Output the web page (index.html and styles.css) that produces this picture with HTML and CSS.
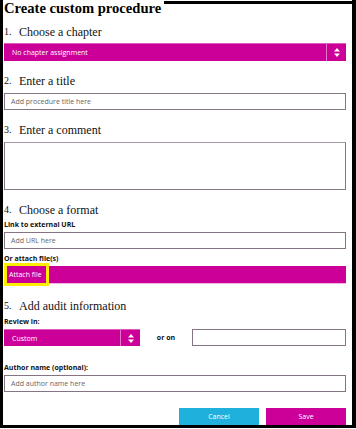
FILE: index.html
```html
<!DOCTYPE html>
<html lang="en">
  <head>
    <meta charset="UTF-8" />
    <meta name="viewport" content="width=device-width, initial-scale=1.0" />
    <title>Create custom procedure</title>
    <link rel="stylesheet" href="styles.css">
  </head>
  <body>
    <div class="frame">
      <div class="top">
        <h1 class="title">Create custom procedure</h1>
        <div class="top-line"></div>
      </div>

      <div class="content">
        <h2 class="step step-first"><span class="num">1.</span>Choose a chapter</h2>
        <div class="select">
          <span class="select-text">No chapter assignment</span>
          <span class="select-arrow">
            <svg width="6" height="9" viewBox="0 0 6 9">
              <path d="M0 3.5 L3 0 L6 3.5 Z M0 5.5 L6 5.5 L3 9 Z" fill="#fff" />
            </svg>
          </span>
        </div>

        <h2 class="step"><span class="num">2.</span>Enter a title</h2>
        <div class="input">Add procedure title here</div>

        <h2 class="step"><span class="num">3.</span>Enter a comment</h2>
        <div class="textarea"></div>

        <h2 class="step"><span class="num">4.</span>Choose a format</h2>
        <label class="field-label">Link to external URL</label>
        <div class="input">Add URL here</div>

        <label class="field-label label-gap">Or attach file(s)</label>
        <div class="attach-bar">
          <span class="attach-btn">Attach file</span>
        </div>

        <h2 class="step step-five"><span class="num">5.</span>Add audit information</h2>
        <label class="field-label label-tight">Review in:</label>
        <div class="review-row">
          <div class="select select-small">
            <span class="select-text">Custom</span>
            <span class="select-arrow">
              <svg width="6" height="9" viewBox="0 0 6 9">
                <path d="M0 3.5 L3 0 L6 3.5 Z M0 5.5 L6 5.5 L3 9 Z" fill="#fff" />
              </svg>
            </span>
          </div>
          <span class="or-on">or on</span>
          <div class="input input-date"></div>
        </div>

        <label class="field-label author-label">Author name (optional):</label>
        <div class="input">Add author name here</div>

        <div class="actions">
          <button type="button" class="btn btn-cancel">Cancel</button>
          <button type="button" class="btn btn-save">Save</button>
        </div>
      </div>
    </div>
  </body>
</html>
```

FILE: styles.css
```css
* {
  margin: 0;
  padding: 0;
  box-sizing: border-box;
}

body {
  background: #fff;
  color: #111;
  font-family: "Open Sans", "Liberation Sans", sans-serif;
}

.frame {
  width: 356px;
  height: 428px;
  border-left: 3px solid #000;
  border-right: 4px solid #000;
  border-bottom: 3px solid #000;
}

.top {
  display: flex;
  align-items: flex-start;
}

.title {
  font-family: "Liberation Serif", serif;
  font-weight: bold;
  font-size: 14.6px;
  line-height: 16px;
  padding-left: 1px;
  color: #000;
}

.top-line {
  flex: 1;
  margin-top: 1px;
  margin-left: 3px;
  border-top: 3px solid #000;
}

.content {
  padding: 0 6px 0 1px;
}

.step {
  display: flex;
  font-family: "Liberation Serif", serif;
  font-weight: normal;
  font-size: 12px;
  line-height: 14px;
  margin-top: 13px;
  color: #111;
}

.step-first {
  margin-top: 9px;
}

.step-five {
  margin-top: 15px;
}

.num {
  width: 15px;
  font-size: 10px;
}

.select {
  display: flex;
  height: 18px;
  margin-top: 4px;
  background: #cc0099;
  border-top: 1px solid #df5cbd;
  color: #fff;
}

.select-text {
  flex: 1;
  padding-left: 8px;
  font-size: 7px;
  line-height: 17px;
}

.select-arrow {
  width: 20px;
  display: flex;
  align-items: center;
  justify-content: center;
  border-left: 1px solid #e07ac8;
}

.input {
  height: 17px;
  margin-top: 5px;
  border: 1px solid #847484;
  padding-left: 6px;
  font-size: 7px;
  line-height: 15px;
  color: #666;
}

.textarea {
  height: 48px;
  margin-top: 5px;
  border: 1px solid #847484;
  border-top-color: #a596a5;
}

.field-label {
  display: block;
  font-size: 7px;
  font-weight: bold;
  line-height: 10px;
  margin-top: 3px;
  color: #111;
}

.field-label + .input {
  margin-top: 2px;
}

.label-gap {
  margin-top: 5px;
}

.label-tight {
  margin-top: 4px;
}

.attach-bar {
  display: flex;
  height: 18px;
  margin-top: 2px;
  background: #cc0099;
  border-bottom: 1px solid #f0b8e0;
  padding-left: 3px;
}

.attach-btn {
  display: flex;
  align-items: center;
  width: 39px;
  height: 17px;
  padding-left: 2px;
  outline: 3px solid #ffee00;
  font-size: 7px;
  color: #fff;
}

.review-row {
  display: flex;
  align-items: center;
  margin-top: 2px;
}

.select-small {
  width: 136px;
  height: 17px;
  margin-top: 0;
}

.or-on {
  width: 52px;
  text-align: center;
  font-size: 7px;
  font-weight: bold;
}

.input-date {
  flex: 1;
  margin-top: 0;
}

.author-label {
  margin-top: 17px;
}

.actions {
  display: flex;
  justify-content: flex-end;
  gap: 7px;
  margin-top: 16px;
}

.btn {
  width: 80px;
  height: 17px;
  border: none;
  font-family: "Open Sans", "Liberation Sans", sans-serif;
  font-size: 7px;
  color: #fff;
  cursor: pointer;
}

.btn-cancel {
  background: #1fb0db;
}

.btn-save {
  background: #cc0099;
}
```
